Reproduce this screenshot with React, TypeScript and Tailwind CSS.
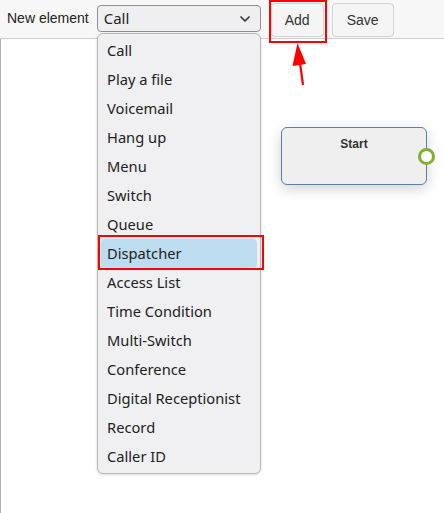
import { ChevronDown } from "lucide-react";

const elements = [
  "Call",
  "Play a file",
  "Voicemail",
  "Hang up",
  "Menu",
  "Switch",
  "Queue",
  "Dispatcher",
  "Access List",
  "Time Condition",
  "Multi-Switch",
  "Conference",
  "Digital Receptionist",
  "Record",
  "Caller ID",
];

export default function App() {
  return (
    <div className="relative w-[444px] h-[513px] bg-white overflow-hidden font-['Liberation_Sans',Arial,sans-serif]">
      {/* Toolbar */}
      <div className="flex items-start h-[39px] bg-[#f7f7f7] border-b border-[#cfcfcf] pl-[7px]">
        <span className="leading-[37px] text-[14px] text-[#222]">New element</span>
        <div className="ml-[8px] mt-[5px] w-[164px] h-[27px] flex items-center justify-between rounded-[4px] border border-[#8f8f8f] bg-[#efeff1] pl-[6px] pr-[7px] font-['Noto_Sans',sans-serif] text-[15px] text-[#222]">
          <span>Call</span>
          <ChevronDown className="w-4 h-4 text-[#333]" strokeWidth={2.5} />
        </div>
        <div className="relative ml-[10px] mt-[3px]">
          <button className="w-[53px] h-[34px] rounded-[4px] border border-[#d4d4d4] bg-[#f5f5f5] text-[14px] text-[#333]">
            Add
          </button>
          <div className="absolute left-[-2px] top-[-3px] w-[58px] h-[43px] border-2 border-[#f00]" />
        </div>
        <button className="ml-[8px] mt-[3px] w-[62px] h-[34px] rounded-[4px] border border-[#d4d4d4] bg-[#f5f5f5] text-[14px] text-[#333]">
          Save
        </button>
      </div>

      {/* Canvas */}
      <div className="relative h-[474px] border-l border-[#b0b0b0]">
        {/* Start node */}
        <div className="absolute left-[280px] top-[88px] w-[146px] h-[58px] rounded-[6px] border border-[#5b80a5] bg-[#efefef] shadow-[0_4px_14px_rgba(0,0,0,0.18)] flex justify-center pt-[7px]">
          <span className="text-[12px] font-bold text-[#333]">Start</span>
          <div className="absolute right-[-9px] top-[20px] w-[17px] h-[17px] rounded-full border-[3px] border-[#7cb22f] bg-white" />
        </div>

        {/* Arrow */}
        <svg className="absolute left-[280px] top-[0px]" width="40" height="60" viewBox="0 0 40 60">
          <line x1="22" y1="46" x2="19" y2="24" stroke="#f00" strokeWidth="2.2" />
          <polygon points="16.5,4 11.5,27 25,25" fill="#f00" />
        </svg>
      </div>

      {/* Dropdown list */}
      <div className="absolute left-[97px] top-[33px] w-[164px] h-[441px] rounded-[6px] border border-[#b8b8b8] bg-[#f0f0f2] py-[2px] px-[3px] shadow-[0_1px_3px_rgba(0,0,0,0.15)] font-['Noto_Sans',sans-serif] text-[14.7px] text-[#222]">
        {elements.map((el) => (
          <div
            key={el}
            className={
              el === "Dispatcher"
                ? "relative h-[29px] leading-[29px] px-[6px] rounded-[4px] bg-[#bcdcef]"
                : "h-[29px] leading-[29px] px-[6px]"
            }
          >
            {el}
            {el === "Dispatcher" && (
              <div className="absolute left-[-3px] top-[-4px] w-[166px] h-[35px] border-2 border-[#f00]" />
            )}
          </div>
        ))}
      </div>
    </div>
  );
}
